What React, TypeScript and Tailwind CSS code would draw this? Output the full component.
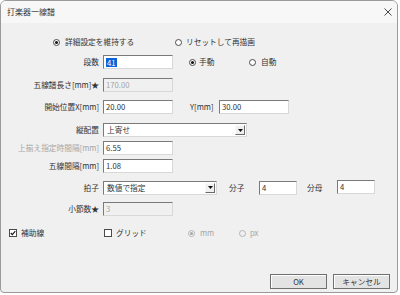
import React from "react";

const font = {
  fontFamily: '"Noto Sans CJK JP", "Noto Sans", sans-serif',
};

function Radio({ checked, disabled }: { checked?: boolean; disabled?: boolean }) {
  return (
    <span
      className={`flex items-center justify-center w-[7px] h-[7px] rounded-full border ${
        disabled ? "border-[#b4b4b4] bg-[#f0f0f0]" : "border-[#4a4a4a] bg-white"
      }`}
    >
      {checked && (
        <span
          className={`w-[3px] h-[3px] rounded-full ${disabled ? "bg-[#a8a8a8]" : "bg-[#111]"}`}
        />
      )}
    </span>
  );
}

function Check({ checked }: { checked?: boolean }) {
  return (
    <span className="flex items-center justify-center w-[8px] h-[8px] border border-[#4a4a4a] bg-white">
      {checked && (
        <svg width="6" height="6" viewBox="0 0 6 6">
          <path d="M0.8 3 L2.3 4.6 L5.3 1.2" fill="none" stroke="#111" strokeWidth="1.1" />
        </svg>
      )}
    </span>
  );
}

function Field({
  value,
  w = "w-[70px]",
  disabled,
  selected,
}: {
  value: string;
  w?: string;
  disabled?: boolean;
  selected?: boolean;
}) {
  return (
    <div
      className={`${w} h-[14px] flex items-center pl-[2px] border border-t-[#7a7a7a] border-l-[#7a7a7a] border-r-[#d8d8d8] border-b-[#d8d8d8] ${
        disabled ? "bg-[#f0f0f0] text-[#a6a6a6]" : "bg-white text-[#333]"
      }`}
    >
      {selected ? (
        <span className="bg-[#0a64d8] text-white px-[1px] leading-[9px]">{value}</span>
      ) : (
        <span>{value}</span>
      )}
    </div>
  );
}

function Select({ value, w }: { value: string; w: string }) {
  return (
    <div
      className={`${w} h-[14px] flex items-center bg-white border border-t-[#7a7a7a] border-l-[#7a7a7a] border-r-[#d8d8d8] border-b-[#d8d8d8]`}
    >
      <span className="flex-1 pl-[3px] text-[#333]">{value}</span>
      <span className="w-[10px] h-[10px] mr-[1px] flex items-center justify-center bg-[#f0f0f0] border border-t-[#fafafa] border-l-[#fafafa] border-r-[#6a6a6a] border-b-[#6a6a6a]">
        <svg width="5" height="3" viewBox="0 0 5 3">
          <path d="M0 0 L5 0 L2.5 3 Z" fill="#111" />
        </svg>
      </span>
    </div>
  );
}

function Label({ children, dim }: { children: React.ReactNode; dim?: boolean }) {
  return (
    <span
      className={`w-[99px] pr-[1px] text-right whitespace-nowrap ${dim ? "text-[#a6a6a6]" : "text-[#333]"}`}
    >
      {children}
    </span>
  );
}

function Button({ children }: { children: React.ReactNode }) {
  return (
    <div className="w-[57px] h-[15px] flex items-center justify-center bg-[#e3e3e3] border border-[#6f6f6f] shadow-[inset_1px_1px_0_#ffffff] text-[#333]">
      {children}
    </div>
  );
}

export default function App() {
  return (
    <div className="w-[400px] h-[295px] bg-white overflow-hidden text-[7.7px] leading-none text-[#333]" style={font}>
      <div className="w-[398px] h-[293px] flex flex-col bg-[#f0f0f0] border border-[#9a9a9a] rounded-t-[6px] rounded-b-[4px] overflow-hidden">
        {/* Title bar */}
        <div className="h-[22px] flex items-center justify-between pl-[6px] pr-[5px] bg-[#f7f7f7]">
          <span className="text-[8px] text-[#333]">打楽器一線譜</span>
          <svg width="8" height="8" viewBox="0 0 8 8">
            <path d="M0.5 0.5 L7.5 7.5 M7.5 0.5 L0.5 7.5" stroke="#333" strokeWidth="0.9" />
          </svg>
        </div>

        {/* Mode */}
        <div className="mt-[12px] h-[14px] flex items-center pl-[52px]">
          <Radio checked />
          <span className="ml-[5px] w-[110px]">詳細設定を維持する</span>
          <Radio />
          <span className="ml-[4px]">リセットして再描画</span>
        </div>

        {/* 段数 */}
        <div className="mt-[6px] h-[14px] flex items-center">
          <Label>段数</Label>
          <span className="w-[3px]" />
          <Field value="41" selected />
          <span className="ml-[16px]">
            <Radio checked />
          </span>
          <span className="ml-[3px] w-[50px]">手動</span>
          <Radio />
          <span className="ml-[5px]">自動</span>
        </div>

        {/* 五線譜長さ */}
        <div className="mt-[9px] h-[14px] flex items-center">
          <Label>五線譜長さ[mm]★</Label>
          <span className="w-[3px]" />
          <Field value="170.00" disabled />
        </div>

        {/* 開始位置 */}
        <div className="mt-[8px] h-[14px] flex items-center">
          <Label>開始位置X[mm]</Label>
          <span className="w-[3px]" />
          <Field value="20.00" />
          <span className="ml-[17px] w-[29px]">Y[mm]</span>
          <Field value="30.00" />
        </div>

        {/* 縦配置 */}
        <div className="mt-[9px] h-[14px] flex items-center">
          <Label>縦配置</Label>
          <span className="w-[3px]" />
          <Select value="上寄せ" w="w-[144px]" />
        </div>

        {/* 上揃え */}
        <div className="mt-[4px] h-[14px] flex items-center">
          <Label dim>上揃え指定時間隔[mm]</Label>
          <span className="w-[3px]" />
          <Field value="6.55" />
        </div>

        {/* 五線間隔 */}
        <div className="mt-[4px] h-[14px] flex items-center">
          <Label>五線間隔[mm]</Label>
          <span className="w-[3px]" />
          <Field value="1.08" />
        </div>

        {/* 拍子 */}
        <div className="mt-[7px] h-[15px] flex items-center">
          <Label>拍子</Label>
          <span className="w-[3px]" />
          <Select value="数値で指定" w="w-[114px]" />
          <span className="ml-[12px] w-[30px]">分子</span>
          <Field value="4" w="w-[38px]" />
          <span className="ml-[10px] w-[30px]">分母</span>
          <div className="-mt-[2px]">
            <Field value="4" w="w-[38px]" />
          </div>
        </div>

        {/* 小節数 */}
        <div className="mt-[7px] h-[14px] flex items-center">
          <Label>小節数★</Label>
          <span className="w-[3px]" />
          <Field value="3" disabled />
        </div>

        {/* 補助線 / グリッド */}
        <div className="mt-[10px] h-[14px] flex items-center pl-[8px]">
          <Check checked />
          <span className="ml-[4px] w-[83px]">補助線</span>
          <Check />
          <span className="ml-[4px] w-[72px]">グリッド</span>
          <Radio checked disabled />
          <span className="ml-[5px] w-[39px] text-[#a6a6a6]">mm</span>
          <Radio disabled />
          <span className="ml-[4px] text-[#a6a6a6]">px</span>
        </div>

        {/* Buttons */}
        <div className="mt-[34px] flex justify-end gap-[6px] pr-[7px]">
          <Button>OK</Button>
          <Button>キャンセル</Button>
        </div>
      </div>
    </div>
  );
}
